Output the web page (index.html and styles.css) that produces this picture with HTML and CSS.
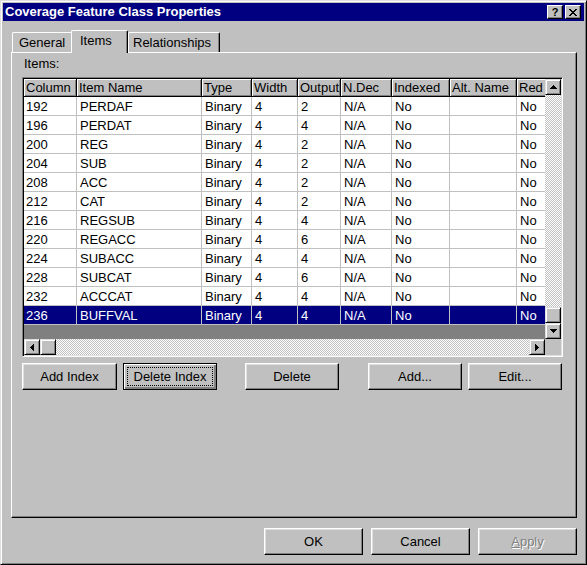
FILE: index.html
```html
<!DOCTYPE html>
<html>
<head>
<meta charset="utf-8">
<title>Coverage Feature Class Properties</title>
<link rel="stylesheet" href="styles.css">
</head>
<body>
<div class="window">
  <div class="titlebar">
    <span class="title">Coverage Feature Class Properties</span>
    <div class="capbtns">
      <span class="capbtn help">?</span>
      <span class="capbtn close"><svg width="8" height="7" viewBox="0 0 8 7" shape-rendering="crispEdges"><path d="M0 0h2v1h-2z M6 0h2v1h-2z M1 1h2v1h-2z M5 1h2v1h-2z M2 2h4v1h-4z M3 3h2v1h-2z M2 4h4v1h-4z M1 5h2v1h-2z M5 5h2v1h-2z M0 6h2v1h-2z M6 6h2v1h-2z" fill="#000"/></svg></span>
    </div>
  </div>
  <div class="content">
    <div class="tabs">
      <div class="tab t-general">General</div>
      <div class="tab sel t-items">Items</div>
      <div class="tab t-rel">Relationships</div>
    </div>
    <div class="panel">
      <div class="label">Items:</div>
      <div class="list">
        <div class="listmain">
          <div class="grid">
            <div class="row head">
              <div class="c">Column</div><div class="c">Item Name</div><div class="c">Type</div><div class="c">Width</div><div class="c">Output</div><div class="c">N.Dec</div><div class="c">Indexed</div><div class="c">Alt. Name</div><div class="c">Red</div>
            </div>
            <div class="row"><div class="c">192</div><div class="c">PERDAF</div><div class="c">Binary</div><div class="c">4</div><div class="c">2</div><div class="c">N/A</div><div class="c">No</div><div class="c"></div><div class="c">No</div></div>
            <div class="row"><div class="c">196</div><div class="c">PERDAT</div><div class="c">Binary</div><div class="c">4</div><div class="c">4</div><div class="c">N/A</div><div class="c">No</div><div class="c"></div><div class="c">No</div></div>
            <div class="row"><div class="c">200</div><div class="c">REG</div><div class="c">Binary</div><div class="c">4</div><div class="c">2</div><div class="c">N/A</div><div class="c">No</div><div class="c"></div><div class="c">No</div></div>
            <div class="row"><div class="c">204</div><div class="c">SUB</div><div class="c">Binary</div><div class="c">4</div><div class="c">2</div><div class="c">N/A</div><div class="c">No</div><div class="c"></div><div class="c">No</div></div>
            <div class="row"><div class="c">208</div><div class="c">ACC</div><div class="c">Binary</div><div class="c">4</div><div class="c">2</div><div class="c">N/A</div><div class="c">No</div><div class="c"></div><div class="c">No</div></div>
            <div class="row"><div class="c">212</div><div class="c">CAT</div><div class="c">Binary</div><div class="c">4</div><div class="c">2</div><div class="c">N/A</div><div class="c">No</div><div class="c"></div><div class="c">No</div></div>
            <div class="row"><div class="c">216</div><div class="c">REGSUB</div><div class="c">Binary</div><div class="c">4</div><div class="c">4</div><div class="c">N/A</div><div class="c">No</div><div class="c"></div><div class="c">No</div></div>
            <div class="row"><div class="c">220</div><div class="c">REGACC</div><div class="c">Binary</div><div class="c">4</div><div class="c">6</div><div class="c">N/A</div><div class="c">No</div><div class="c"></div><div class="c">No</div></div>
            <div class="row"><div class="c">224</div><div class="c">SUBACC</div><div class="c">Binary</div><div class="c">4</div><div class="c">4</div><div class="c">N/A</div><div class="c">No</div><div class="c"></div><div class="c">No</div></div>
            <div class="row"><div class="c">228</div><div class="c">SUBCAT</div><div class="c">Binary</div><div class="c">4</div><div class="c">6</div><div class="c">N/A</div><div class="c">No</div><div class="c"></div><div class="c">No</div></div>
            <div class="row"><div class="c">232</div><div class="c">ACCCAT</div><div class="c">Binary</div><div class="c">4</div><div class="c">4</div><div class="c">N/A</div><div class="c">No</div><div class="c"></div><div class="c">No</div></div>
            <div class="row selrow"><div class="c">236</div><div class="c">BUFFVAL</div><div class="c">Binary</div><div class="c">4</div><div class="c">4</div><div class="c">N/A</div><div class="c">No</div><div class="c"></div><div class="c">No</div></div>
          </div>
          <div class="vscroll">
            <div class="sbtn"><svg width="7" height="4" viewBox="0 0 7 4" shape-rendering="crispEdges"><path d="M3 0h1v1h-1z M2 1h3v1h-3z M1 2h5v1h-5z M0 3h7v1h-7z" fill="#000"/></svg></div>
            <div class="track vtrack"><div class="thumb"></div></div>
            <div class="sbtn"><svg width="7" height="4" viewBox="0 0 7 4" shape-rendering="crispEdges"><path d="M0 0h7v1h-7z M1 1h5v1h-5z M2 2h3v1h-3z M3 3h1v1h-1z" fill="#000"/></svg></div>
          </div>
        </div>
        <div class="hscroll">
          <div class="sbtn"><svg width="4" height="7" viewBox="0 0 4 7" shape-rendering="crispEdges"><path d="M3 0h1v7h-1z M2 1h1v5h-1z M1 2h1v3h-1z M0 3h1v1h-1z" fill="#000"/></svg></div>
          <div class="thumb"></div>
          <div class="track htrack"></div>
          <div class="sbtn"><svg width="4" height="7" viewBox="0 0 4 7" shape-rendering="crispEdges"><path d="M0 0h1v7h-1z M1 1h1v5h-1z M2 2h1v3h-1z M3 3h1v1h-1z" fill="#000"/></svg></div>
          <div class="corner"></div>
        </div>
      </div>
      <div class="btnrow">
        <div class="btn b-addidx">Add Index</div>
        <div class="btn def b-delidx">Delete Index</div>
        <div class="btn b-del">Delete</div>
        <div class="btn b-add">Add...</div>
        <div class="btn b-edit">Edit...</div>
      </div>
    </div>
    <div class="dlgbtns">
      <div class="btn dbtn">OK</div>
      <div class="btn dbtn">Cancel</div>
      <div class="btn dbtn disabled"><u>A</u>pply</div>
    </div>
  </div>
</div>
</body>
</html>
```
FILE: styles.css
```css
* { box-sizing: border-box; }
html, body { margin: 0; padding: 0; }
body {
  background: #c0c0c0;
  font-family: "Liberation Sans", Arial, sans-serif;
  font-size: 13px;
  color: #000;
}
.window {
  width: 587px;
  height: 565px;
  background: #c0c0c0;
  border: 1px solid;
  border-color: #dfdfdf #000 #000 #dfdfdf;
  box-shadow: inset 1px 1px 0 #fff, inset -1px -1px 0 #808080;
  padding: 2px;
}
.titlebar {
  height: 18px;
  background: #000080;
  display: flex;
  align-items: center;
  justify-content: space-between;
  padding: 0 3px 0 2px;
}
.title {
  color: #fff;
  font-weight: bold;
  font-size: 13px;
  line-height: 18px;
}
.capbtns { display: flex; gap: 2px; }
.capbtn {
  width: 16px;
  height: 14px;
  background: #c0c0c0;
  border: 1px solid;
  border-color: #fff #000 #000 #fff;
  box-shadow: inset -1px -1px 0 #808080;
  display: flex;
  align-items: center;
  justify-content: center;
  font-weight: bold;
  font-size: 11px;
  line-height: 12px;
}
.content { padding: 0 7px 0 8px; }
.tabs {
  margin-top: 9px;
  height: 22px;
  display: flex;
  align-items: flex-end;
  padding-left: 1px;
  position: relative;
  z-index: 2;
}
.tab {
  height: 20px;
  background: #c0c0c0;
  border-left: 1px solid #fff;
  border-top: 1px solid #fff;
  border-right: 1px solid #000;
  border-radius: 2px 2px 0 0;
  box-shadow: inset -1px 0 0 #808080;
  padding-top: 2px;
  line-height: 15px;
  white-space: nowrap;
}
.t-general { width: 61px; padding-left: 6px; }
.t-items { width: 57px; padding-left: 8px; }
.t-rel { width: 92px; padding-left: 4px; }
.tab.sel {
  height: 23px;
  margin-bottom: -1px;
  margin-left: -2px;
  position: relative;
  z-index: 3;
}
.panel {
  height: 466px;
  border: 1px solid;
  border-color: #fff #000 #000 #fff;
  box-shadow: inset -1px -1px 0 #808080;
  padding: 3px 0 0 10px;
  position: relative;
  z-index: 1;
}
.label { margin-left: 2px; line-height: 15px; }
.list {
  margin-top: 6px;
  width: 541px;
  height: 280px;
  border: 1px solid;
  border-color: #808080 #fff #fff #808080;
  box-shadow: inset 1px 1px 0 #000, inset -1px -1px 0 #dfdfdf;
  padding: 1px;
}
.listmain { display: flex; height: 260px; }
.grid {
  width: 521px;
  height: 260px;
  background: #808080;
  overflow: hidden;
}
.row {
  display: grid;
  grid-template-columns: 53px 125px 50px 46px 43px 51px 58px 67px 70px;
  width: max-content;
  height: 19px;
  background: #fff;
}
.row .c {
  height: 19px;
  line-height: 19px;
  border-right: 1px solid #c0c0c0;
  border-bottom: 1px solid #c0c0c0;
  padding-left: 3px;
  white-space: nowrap;
  overflow: hidden;
}
.row .c:first-child { padding-left: 2px; }
.row.head { height: 18px; background: #c0c0c0; }
.row.head .c {
  height: 18px;
  line-height: 18px;
  border-right: 1px solid #000;
  border-bottom: 1px solid #000;
  box-shadow: inset 1px 1px 0 #fff, inset -1px -1px 0 #808080;
  padding-left: 2px;
  overflow: visible;
}
.row.head .c:first-child { padding-left: 2px; }
.row.selrow { background: #000080; color: #fff; }
.vscroll {
  width: 16px;
  height: 260px;
  display: flex;
  flex-direction: column;
}
.sbtn {
  width: 16px;
  height: 16px;
  flex: none;
  background: #c0c0c0;
  border: 1px solid;
  border-color: #dfdfdf #000 #000 #dfdfdf;
  box-shadow: inset 1px 1px 0 #fff, inset -1px -1px 0 #808080;
  display: flex;
  align-items: center;
  justify-content: center;
}
.sbtn svg { display: block; }
.track {
  background: repeating-conic-gradient(#c0c0c0 0 25%, #fff 0 50%) 0 0 / 2px 2px;
}
.vtrack {
  flex: 1;
  display: flex;
  flex-direction: column;
  justify-content: flex-end;
}
.thumb {
  width: 16px;
  height: 16px;
  flex: none;
  background: #c0c0c0;
  border: 1px solid;
  border-color: #dfdfdf #000 #000 #dfdfdf;
  box-shadow: inset 1px 1px 0 #fff, inset -1px -1px 0 #808080;
}
.hscroll { display: flex; height: 16px; }
.htrack { flex: 1; height: 16px; }
.corner { width: 16px; height: 16px; background: #c0c0c0; }
.btnrow { display: flex; margin-top: 6px; height: 27px; }
.btn {
  height: 27px;
  background: #c0c0c0;
  border: 1px solid;
  border-color: #fff #000 #000 #fff;
  box-shadow: inset -1px -1px 0 #808080, inset 1px 1px 0 #dfdfdf;
  text-align: center;
  line-height: 25px;
  white-space: nowrap;
  position: relative;
}
.b-addidx { width: 95px; }
.b-delidx { width: 94px; margin-left: 6px; }
.b-del { width: 94px; margin-left: 28px; }
.b-add { width: 94px; margin-left: 29px; }
.b-edit { width: 94px; margin-left: 6px; }
.btn.def {
  border: 1px solid #000;
  box-shadow: inset 1px 1px 0 #fff, inset -1px -1px 0 #808080, inset -2px -2px 0 #808080;
}
.btn.def::after {
  content: "";
  position: absolute;
  left: 3px; top: 3px; right: 3px; bottom: 3px;
  border: 1px dotted #000;
}
.dlgbtns {
  display: flex;
  justify-content: flex-end;
  gap: 8px;
  margin-top: 10px;
}
.dbtn { width: 99px; }
.btn.disabled { color: #808080; text-shadow: 1px 1px 0 #fff; }
.btn.disabled u { text-decoration: underline; }
```
